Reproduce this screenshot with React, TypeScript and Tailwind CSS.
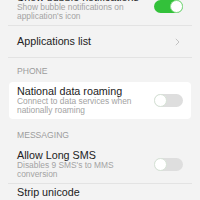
import { ReactNode } from "react";

const FONT = "font-['Liberation_Sans','Roboto',sans-serif]";

function Toggle({ on }: { on: boolean }) {
  return (
    <div
      className={`relative h-[13px] w-[29px] shrink-0 rounded-full ${on ? "bg-[#33c13a]" : "bg-[#dedede]"}`}
    >
      <div
        className={`absolute top-0 h-[13px] w-[13px] rounded-full bg-white ${on ? "right-0 border border-[#8edc8e]" : "left-0 border border-[#d6e3d6]"}`}
      />
    </div>
  );
}

function Row({
  title,
  lines,
  right,
  divider = true,
  className = "",
}: {
  title: string;
  lines?: string[];
  right?: ReactNode;
  divider?: boolean;
  className?: string;
}) {
  return (
    <div className={`mx-[8px] ${divider ? "border-b border-[#e3e3e3]" : ""} ${className}`}>
      <div className="flex items-center pl-[9px] pr-[9px]">
        <div className="min-w-0 flex-1">
          <div className="text-[10.75px] leading-[11px] text-[#222]">{title}</div>
          {lines?.map((l) => (
            <div key={l} className="text-[8.4px] leading-[8.5px] text-[#a3a3a3]">
              {l}
            </div>
          ))}
        </div>
        {right}
      </div>
    </div>
  );
}

function Header({ label, className = "" }: { label: string; className?: string }) {
  return (
    <div className={`px-[17px] pb-[6px] text-[8.6px] leading-[10px] text-[#9c9c9c] ${className}`}>{label}</div>
  );
}

export default function App() {
  return (
    <div className={`h-[200px] w-[200px] overflow-hidden bg-[#f3f3f3] ${FONT}`}>
      <div className="-mt-[12px]">
        <Row
          title="Show bubble notifications"
          lines={["Show bubble notifications on", "application's icon"]}
          right={<Toggle on />}
          className="pb-[5px] pt-[4px]"
        />
        <Row
          title="Applications list"
          className="pb-[10px] pt-[10px]"
          right={
            <svg width="5" height="8" viewBox="0 0 5 8" className="mr-[3px]">
              <path d="M0.8 0.8L4 4L0.8 7.2" fill="none" stroke="#c2c2c2" strokeWidth="1" />
            </svg>
          }
        />
        <Header label="PHONE" className="pt-[8px]" />
        <div className="mx-[9px] rounded-[4px] bg-white">
          <div className="flex items-center pb-[5px] pl-[8px] pr-[8px] pt-[4px]">
            <div className="min-w-0 flex-1">
              <div className="text-[10.75px] leading-[11px] text-[#222]">National data roaming</div>
              <div className="text-[8.4px] leading-[8.5px] text-[#a3a3a3]">Connect to data services when</div>
              <div className="text-[8.4px] leading-[8.5px] text-[#a3a3a3]">nationally roaming</div>
            </div>
            <Toggle on={false} />
          </div>
        </div>
        <Header label="MESSAGING" className="pt-[11px]" />
        <Row
          title="Allow Long SMS"
          lines={["Disables 9 SMS's to MMS", "conversion"]}
          right={<Toggle on={false} />}
          className="pb-[5px] pt-[4px]"
        />
        <Row title="Strip unicode" divider={false} className="pt-[3px]" />
      </div>
    </div>
  );
}
